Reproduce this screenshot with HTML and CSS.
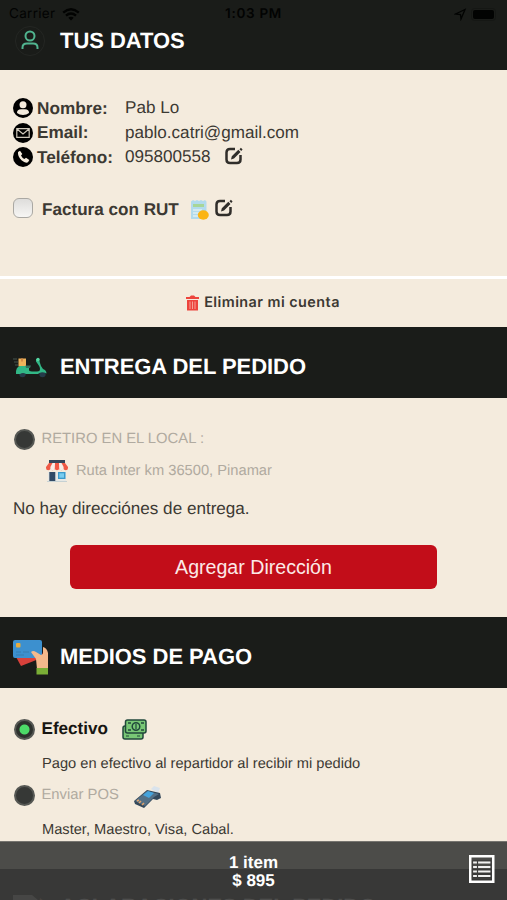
FILE: index.html
```html
<!DOCTYPE html>
<html lang="es">
<head>
<meta charset="utf-8">
<meta name="viewport" content="width=device-width, initial-scale=1">
<title>Tu pedido</title>
<link rel="stylesheet" href="styles.css">
</head>
<body>
<div class="statusbar">
  <span class="carrier">Carrier
    <svg width="18" height="13" viewBox="0 0 18 13" fill="none" stroke="#020302" stroke-width="2.4"><path d="M1.2 4.7Q9-2 16.800 4.700M4 7.600Q9 3.400 14 7.600"/><path d="M9 12.500 6.300 9.800Q9 7.800 11.700 9.800Z" fill="#020302" stroke="none"/></svg>
  </span>
  <span class="clock">1:03 PM</span>
  <span class="power">
    <svg width="13" height="13" viewBox="0 0 13 13" fill="none" stroke="#020302" stroke-width="1.3"><path d="M1.500 6 11 1.500 7 11 6.500 6.500Z"/></svg>
    <svg width="27" height="13" viewBox="0 0 27 13"><rect x=".5" y=".5" width="24" height="12" rx="3" fill="none" stroke="#151714"/><rect x="2" y="2" width="21" height="9" rx="2" fill="#020302"/></svg>
  </span>
</div>

<header class="band band-first">
  <svg class="band-icon" width="34" height="34" viewBox="0 0 34 34" fill="none"><circle cx="17" cy="17" r="14.500" stroke="#242623"/><circle cx="17" cy="12" r="4.500" stroke="#50b48f" stroke-width="2"/><path d="M9.500 25v-1.500q0-4 4.500-4h6q4.500 0 4.500 4V25" stroke="#50b48f" stroke-width="2"/></svg>
  <h2>TUS DATOS</h2>
</header>

<section class="profile">
  <div class="field">
    <svg width="20" height="20" viewBox="0 0 20 20"><circle cx="10" cy="10" r="10"/><circle cx="10" cy="6.700" r="3.500" fill="#f4ebdd"/><path d="M4 15q0-3.700 4-3.700h4q4 0 4 3.700-2.500 2-6 2t-6-2Z" fill="#f4ebdd"/></svg>
    <b>Nombre:</b><span>Pab Lo</span>
  </div>
  <div class="field">
    <svg width="20" height="20" viewBox="0 0 20 20"><circle cx="10" cy="10" r="10"/><path d="M3.800 5.700h12.400v8.600H3.800ZM4 6l6 5 6-5" fill="none" stroke="#cfc8bb" stroke-width="1.200"/></svg>
    <b>Email:</b><span>pablo.catri@gmail.com</span>
  </div>
  <div class="field">
    <svg width="20" height="20" viewBox="0 0 20 20"><circle cx="10" cy="10" r="10"/><path d="m5 5 2-1.300 2.300 3.300-1.300 1.500q1 2.300 3.400 3.500l1.600-1.300 3.300 2.200-1.300 2.300q-2.500 1.500-6.500-2T5 5Z" fill="#f4ebdd"/></svg>
    <b>Teléfono:</b><span>095800558</span>
    <svg class="edit" width="18" height="18" viewBox="0 0 18 18"><path d="M10 2H5Q1.500 2 1.500 5.500v7Q1.500 16 5 16h7q3.500 0 3.500-3.500V8" fill="none" stroke="#302e2a" stroke-width="2.500"/><path d="m6 12.500.8-3.200 6.500-6.500 2.200 2.200L9 11.500Zm8.500-10.300 1.400-1.400 1.700 1.700-1.400 1.400Z" fill="#302e2a"/></svg>
  </div>
  <div class="invoice">
    <span class="checkbox"></span>
    <b>Factura con RUT</b>
    <svg class="receipt" width="18" height="20" viewBox="0 0 18 20"><path d="M0 1.500 2 0l2 1 2-1 2 1 2-1 2 1 2-1 1.500 1.500V19H0Z" fill="#b2dbed"/><path d="M2 4h11v3H2Z" fill="#a8d697"/><path d="M2 10h9M2 13h6M2 16h5" stroke="#deeff2" stroke-width="1.500"/><ellipse cx="12.300" cy="15" rx="5.500" ry="4.700" fill="#fbb414"/></svg>
    <svg class="edit2" width="18" height="18" viewBox="0 0 18 18"><path d="M10 2H5Q1.500 2 1.500 5.500v7Q1.500 16 5 16h7q3.500 0 3.500-3.500V8" fill="none" stroke="#302e2a" stroke-width="2.500"/><path d="m6 12.500.8-3.200 6.500-6.500 2.200 2.200L9 11.500Zm8.500-10.300 1.400-1.400 1.700 1.700-1.400 1.400Z" fill="#302e2a"/></svg>
  </div>
</section>

<div class="remove">
  <svg width="13" height="16" viewBox="0 0 13 16" fill="#ed443c"><path d="M0 2h3.500L5 .4h3L9.500 2H13v2H0Z"/><path d="M1 5h11v10.500H1Z"/><path d="M4 6.500v7.500M6.500 6.500v7.500M9 6.500v7.500" stroke="#f6b9ad" stroke-width=".8"/></svg>
  <b>Eliminar mi cuenta</b>
</div>

<header class="band">
  <svg class="band-icon" width="34" height="34" viewBox="0 0 34 34"><path d="M0 9h4M1 12h4M2 15h3" stroke="#46554e"/><circle cx="9.500" cy="24" r="3.200" fill="#253a49"/><circle cx="29.500" cy="24" r="3.200" fill="#253a49"/><path d="M5.500 8.500h7.500v8H5.500Z" fill="#efb35b"/><path d="M8 8.500h2v3H8Z" fill="#d48a47"/><path d="M3 24q-.5-7 4-8h7q2.500 0 2 3-.5 2.500 3 2.500h5q3 0 3-2.500 0-2-1.500-4L23 11.500V9h3l1 4q.5 3 3 6 3.500 1 3.500 4.500-4-2-7-.5l-1.500 1H13q-3-2-6 0Z" fill="#32b786"/><path d="M12.500 15.500H18l-1 2.500h-4Z" fill="#31705f"/><circle cx="25" cy="9.500" r="1.700" fill="#55d9a3"/></svg>
  <h2>ENTREGA DEL PEDIDO</h2>
</header>

<section class="delivery">
  <div class="option">
    <span class="radio"></span><span class="pickup">RETIRO EN EL LOCAL :</span>
  </div>
  <div class="store">
    <svg width="22" height="23" viewBox="0 0 22 23"><path d="M3 0h16v3H3Z" fill="#33475b"/><path d="M2 12h18v9H2Z" fill="#e6e8e5"/><path d="M3 3h16l3 4v1a2.200 2.200 0 0 1-4.400 0 2.200 2.200 0 0 1-4.400 0 2.200 2.200 0 0 1-4.400 0 2.200 2.200 0 0 1-4.400 0A2.200 2.200 0 0 1 0 8V7Z" fill="#ef5946"/><path d="M6.500 3H9L8.800 8a2.200 2.200 0 0 1-4.400 0V7ZM13 3h2.500l2.100 4v1a2.200 2.200 0 0 1-4.400 0Z" fill="#f6eee8"/><path d="M3.300 12h6v9h-6Z" fill="#314a66"/><path d="M12 12h7.500v7H12Z" fill="#3c9acb"/><path d="M13.300 13.300H18v4.400h-4.700Z" fill="#79cdf0"/><path d="M1 21.500h20" stroke="#c6d1d3"/></svg>
    <span>Ruta Inter km 36500, Pinamar</span>
  </div>
  <p>No hay direcciónes de entrega.</p>
  <button type="button">Agregar Dirección</button>
</section>

<header class="band">
  <svg class="band-icon pay" width="36" height="36" viewBox="0 0 36 36"><path d="m3 18 25-7 3 7L8 27Z" fill="#d8413b"/><rect x="0" y="1" width="29" height="18" rx="2" fill="#3c90cf"/><rect x="3" y="4" width="4.500" height="4.500" rx="1" fill="#e8ab3b"/><path d="M3 13h5m2 0h6m-13 3h8" stroke="#367caf"/><path d="M18 13q2-2 5 0l5 3 2-1V8q4 1 5 6v16H24l-1-10Z" fill="#f4b98c"/><path d="M23.500 29H35v6.500H23.500Z" fill="#7aae36"/></svg>
  <h2>MEDIOS DE PAGO</h2>
</header>

<section class="payment">
  <div class="option">
    <span class="radio on"></span><b>Efectivo</b>
    <svg class="cash" width="25" height="21" viewBox="0 0 25 21"><g fill="#78c775" stroke="#21483b" stroke-width="1.500"><rect x="1" y="7" width="20" height="13" rx="2"/><rect x="3.500" y="1" width="20.500" height="13" rx="2"/><path d="M6 4h3M6 11h3m10-7h3m-3 7h3"/><circle cx="14" cy="7.500" r="3.800"/><path d="M14 5v5M4 17h3m8 0h3" fill="none" stroke-width="1.200"/></g></svg>
  </div>
  <p class="cash-note">Pago en efectivo al repartidor al recibir mi pedido</p>
  <div class="option">
    <span class="radio"></span><span class="pos">Enviar POS</span>
    <svg class="terminal" width="28" height="23" viewBox="0 0 28 23"><path d="m17 3 3-3 6 2-2 5Z" fill="#d9e3ec"/><path d="M0 15 13 4l13 3 1 5-4 2-4-1-9 9-9-4Z" fill="#34485a"/><path d="m1 15 12-10 12 3-5 3-9 9Z" fill="#547086"/><path d="m9 9 5-4 6 2-5 5Z" fill="#45a3dc"/><path d="m3 15 2-1m0 3 2-2m1 4 2-2" stroke="#e1a36b" stroke-width="1.600"/></svg>
  </div>
  <p class="card-note">Master, Maestro, Visa, Cabal.</p>
</section>

<header class="band band-last">
  <svg class="band-icon" width="34" height="34" viewBox="0 0 34 34"><path d="M0 1h19l7 6v24H0Z" fill="#b5b5b5"/><path d="m27 4 4 3-2 5-3-2Z" fill="#c08058"/></svg>
  <h2>ACLARACIONES DEL PEDIDO</h2>
</header>

<footer class="cart">
  <div class="total"><b>1 item</b><b>$ 895</b></div>
  <svg class="list" width="26" height="28" viewBox="0 0 26 28" fill="none"><rect x="1.250" y="1.250" width="23" height="25.500" stroke="#fff" stroke-width="2.500"/><path d="M4 7.500h18M4 12h18M4 16.500h18M4 21h18" stroke="#f1f1f1" stroke-width="2"/><path d="M3.500 5.500v18M22 5.500v18M3.500 5.500H22M3.500 23.500H22M8.500 5.500v18" stroke="#3d3d3c" stroke-width="1.200"/></svg>
</footer>
</body>
</html>
```
FILE: styles.css
```css
* { box-sizing: border-box; }
body {
  margin: 0;
  height: 900px;
  overflow: hidden;
  position: relative;
  background: #f4ebdd;
  color: #3c3933;
  font-family: "Liberation Sans", Arial, sans-serif;
  font-size: 17px;
  text-rendering: geometricPrecision;
}
svg { display: block; flex: none; }
h2, p { margin: 0; }
span, b, h2, p { white-space: nowrap; }

.statusbar {
  position: absolute;
  inset: 0 0 auto;
  height: 28px;
  padding: 0 9px;
  display: grid;
  grid-template-columns: 1fr auto 1fr;
  align-items: center;
  color: #020302;
  font: 13.5px Inter, sans-serif;
}
.carrier, .power { display: flex; align-items: center; }
.carrier { gap: 7px; letter-spacing: .3px; }
.power { justify-content: flex-end; gap: 4px; }
.clock { font-weight: 600; letter-spacing: .7px; }

.band {
  height: 71px;
  padding: 9px 13px 0;
  display: flex;
  align-items: center;
  gap: 13px;
  background: #1a1c19;
  color: #fff;
}
.band h2 { font-size: 22px; line-height: 26px; letter-spacing: -.05px; }
.band-first { height: 70px; padding-top: 11px; }
.band-icon.pay { margin-right: -2px; }
.band-last { height: 32px; padding-top: 25px; align-items: flex-start; overflow: hidden; }

.profile { height: 209px; padding: 26px 13px 0; border-bottom: 3px solid #fff; }
.field { height: 24.5px; display: flex; align-items: center; }
.field b { width: 92px; padding-left: 4px; font-size: 17.2px; }
.field span { font-size: 17.1px; }
.field .edit { margin: -2px 0 0 14px; }
.invoice { height: 24px; margin-top: 28px; display: flex; align-items: center; }
.invoice b { margin-left: 9px; font-size: 17.1px; }
.checkbox {
  width: 20px;
  height: 20px;
  margin-top: -4px;
  border: 1.5px solid #aaa8a3;
  border-radius: 6px;
  background: linear-gradient(#dedddb, #f7f6f4);
}
.receipt { margin-left: 12px; }
.edit2 { margin: -3px 0 0 6px; }

.remove { height: 48px; padding: 0 0 1px 19px; display: flex; align-items: center; justify-content: center; gap: 5px; }
.remove b { font: 600 14.4px Inter, sans-serif; letter-spacing: .45px; }

.delivery { height: 219px; padding: 30px 13px 0; }
.option { height: 22px; display: flex; align-items: center; color: #b0aaa0; }
.radio {
  width: 21px;
  height: 21px;
  margin-right: 7px;
  border: 2px solid #565854;
  border-radius: 50%;
  background: #363836;
}
.radio.on { background: radial-gradient(circle, #4cdb68 0 4.500px, #2d312d 5.500px); }
.pickup { font-size: 14.8px; }
.store { height: 24px; margin: 9px 0 0 33px; display: flex; align-items: center; gap: 8px; color: #b0aaa0; font-size: 14.7px; }
.delivery p { margin-top: 16px; line-height: 20px; font-size: 17.1px; }
.delivery button {
  display: block;
  width: 367px;
  height: 44px;
  margin: 26px auto 0;
  padding: 0;
  border: 0;
  border-radius: 6px;
  background: #c20d19;
  color: #fce9e7;
  font: 19.6px "Liberation Sans", Arial, sans-serif;
}

.payment { height: 181px; padding: 30px 13px 0; }
.option b { color: #171612; font-size: 17.1px; }
.option .radio { margin-left: .5px; }
.cash { margin-left: 14px; }
.payment p { margin-left: 29px; font-size: 14.65px; line-height: 18px; }
.cash-note { margin-top: 15px; margin-bottom: 11px; }
.card-note { margin-top: 15px; }
.pos { font-size: 14.8px; }
.terminal { margin-left: 15px; margin-top: 4px; }

.cart {
  position: absolute;
  inset: auto 0 0;
  height: 59px;
  background: rgba(59, 59, 58, .91);
  border-top: 1px solid #777570;
  color: #fff;
  display: grid;
  grid-template-columns: 1fr auto 1fr;
}
.total {
  grid-column: 2;
  padding-top: 12px;
  display: flex;
  flex-direction: column;
  align-items: center;
  font-size: 17px;
  line-height: 18px;
}
.list { justify-self: end; margin: 13px 12px 0 0; }
```
